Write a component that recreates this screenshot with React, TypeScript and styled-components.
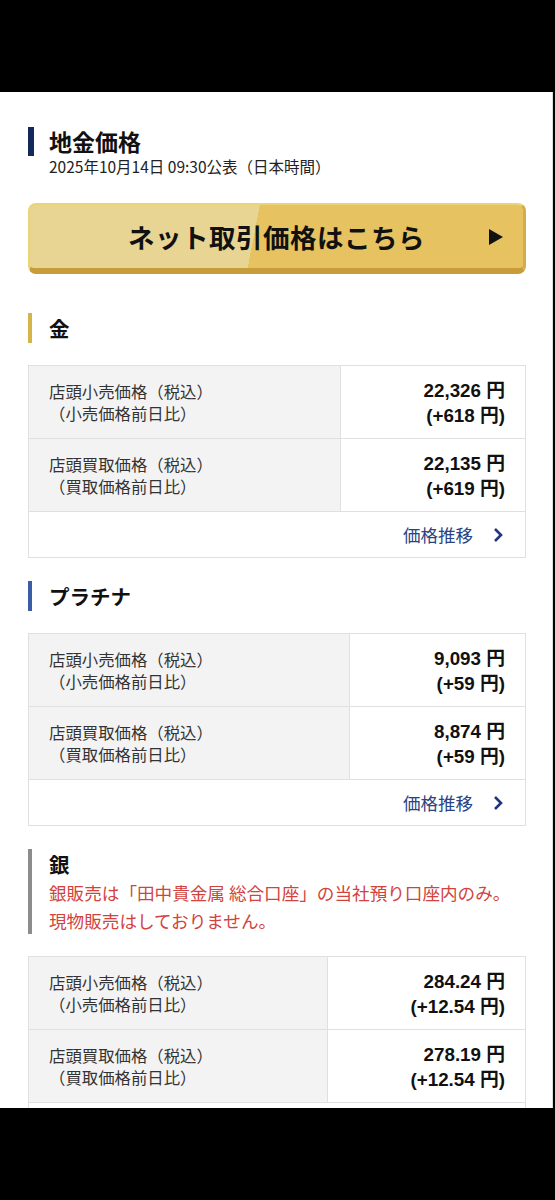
import React from "react";
import styled, { createGlobalStyle } from "styled-components";

const GlobalStyle = createGlobalStyle`
  html, body {
    margin: 0;
    padding: 0;
    background: #000;
  }
  body {
    font-family: "Noto Sans CJK JP", "Noto Sans", sans-serif;
    color: #222;
  }
`;

type Row = { label: string; sub: string; price: string; diff: string };

type Metal = {
  name: string;
  bar: string;
  leftWidth: number;
  note?: string[];
  rows: Row[];
};

const metals: Metal[] = [
  {
    name: "金",
    bar: "#d5b54a",
    leftWidth: 312,
    rows: [
      { label: "店頭小売価格（税込）", sub: "（小売価格前日比）", price: "22,326", diff: "+618" },
      { label: "店頭買取価格（税込）", sub: "（買取価格前日比）", price: "22,135", diff: "+619" },
    ],
  },
  {
    name: "プラチナ",
    bar: "#3a5da6",
    leftWidth: 321,
    rows: [
      { label: "店頭小売価格（税込）", sub: "（小売価格前日比）", price: "9,093", diff: "+59" },
      { label: "店頭買取価格（税込）", sub: "（買取価格前日比）", price: "8,874", diff: "+59" },
    ],
  },
  {
    name: "銀",
    bar: "#8c8c8c",
    leftWidth: 299,
    note: ["銀販売は「田中貴金属 総合口座」の当社預り口座内のみ。", "現物販売はしておりません。"],
    rows: [
      { label: "店頭小売価格（税込）", sub: "（小売価格前日比）", price: "284.24", diff: "+12.54" },
      { label: "店頭買取価格（税込）", sub: "（買取価格前日比）", price: "278.19", diff: "+12.54" },
    ],
  },
];

const Screen = styled.div`
  display: flex;
  flex-direction: column;
  height: 1200px;
  background: #000;
`;

const Letterbox = styled.div`
  height: 92px;
  flex: none;
  background: #000;
`;

const Page = styled.main`
  height: 1016px;
  flex: none;
  overflow: hidden;
  background: #fff;
  margin-right: 2px;
  border-right: 1px solid #dcdcdc;
  padding: 0 26px 0 28px;
`;

const TitleRow = styled.div`
  margin-top: 35px;
  display: flex;
  align-items: stretch;
`;

const TitleBar = styled.span`
  width: 6px;
  flex: none;
  background: #13295b;
  margin-right: 15px;
`;

const Title = styled.h1`
  margin: 0;
  font-size: 23px;
  line-height: 29px;
  font-weight: 700;
  color: #111;
`;

const Published = styled.p`
  margin: 0 0 0 21px;
  font-size: 15.5px;
  line-height: 20px;
  color: #222;
`;

const NetButton = styled.a`
  margin-top: 27px;
  height: 71px;
  box-sizing: border-box;
  display: flex;
  align-items: center;
  justify-content: center;
  position: relative;
  border-radius: 8px;
  border: 2px solid #ebd473;
  border-right: 3px solid #d3ad4b;
  border-bottom: 6px solid #c79d3b;
  background: linear-gradient(101deg, #e8d593 0 45.5%, #e6c360 45.5% 100%);
  color: #111;
  text-decoration: none;
  font-size: 26.5px;
  font-weight: 700;
  letter-spacing: 0.5px;
`;

const ButtonArrow = styled.span`
  position: absolute;
  right: 20px;
  top: 50%;
  transform: translateY(-50%);
  width: 0;
  height: 0;
  border-top: 8px solid transparent;
  border-bottom: 8px solid transparent;
  border-left: 14px solid #111;
`;

const Section = styled.section`
  margin-top: 39px;
  & + & {
    margin-top: 23px;
  }
`;

const Heading = styled.div<{ $bar: string }>`
  border-left: 4px solid ${(p) => p.$bar};
  padding-left: 17px;
`;

const HeadingText = styled.h2`
  margin: 0;
  font-size: 20.5px;
  line-height: 30px;
  font-weight: 700;
  color: #111;
`;

const Note = styled.p`
  margin: 0;
  font-size: 17.6px;
  line-height: 27.5px;
  color: #d2433d;
`;

const Table = styled.div<{ $left: number }>`
  margin-top: 22px;
  display: grid;
  grid-template-columns: ${(p) => p.$left}px 1fr;
  border: 1px solid #e0e0e0;
  border-bottom: none;
`;

const LabelCell = styled.div`
  height: 73px;
  box-sizing: border-box;
  background: #f3f3f3;
  border-right: 1px solid #e0e0e0;
  border-bottom: 1px solid #e0e0e0;
  padding-left: 20px;
  display: flex;
  flex-direction: column;
  justify-content: center;
  font-size: 16.4px;
  line-height: 22px;
  color: #333;
`;

const ValueCell = styled.div`
  height: 73px;
  box-sizing: border-box;
  border-bottom: 1px solid #e0e0e0;
  padding-right: 20px;
  display: flex;
  flex-direction: column;
  justify-content: center;
  align-items: flex-end;
  font-family: "Liberation Sans", "Noto Sans CJK JP", sans-serif;
  font-size: 18.8px;
  line-height: 23px;
  font-weight: 700;
  color: #111;
`;

const Yen = styled.span`
  font-family: "Noto Sans CJK JP", sans-serif;
  font-weight: 700;
`;

const LinkRow = styled.a`
  grid-column: 1 / -1;
  height: 46px;
  box-sizing: border-box;
  border-bottom: 1px solid #e0e0e0;
  display: flex;
  align-items: center;
  justify-content: flex-end;
  gap: 20px;
  padding-right: 22px;
  font-size: 17.5px;
  color: #2a4382;
  text-decoration: none;
`;

const Price = ({ value }: { value: string }) => (
  <span>
    {value} <Yen>円</Yen>
  </span>
);

export default function App() {
  return (
    <>
      <GlobalStyle />
      <Screen>
        <Letterbox />
        <Page>
          <TitleRow>
            <TitleBar />
            <Title>地金価格</Title>
          </TitleRow>
          <Published>2025年10月14日 09:30公表（日本時間）</Published>

          <NetButton href="#">
            ネット取引価格はこちら
            <ButtonArrow />
          </NetButton>

          {metals.map((m) => (
            <Section key={m.name}>
              <Heading $bar={m.bar}>
                <HeadingText>{m.name}</HeadingText>
                {m.note?.map((line) => (
                  <Note key={line}>{line}</Note>
                ))}
              </Heading>
              <Table $left={m.leftWidth}>
                {m.rows.map((r) => (
                  <React.Fragment key={r.label}>
                    <LabelCell>
                      <span>{r.label}</span>
                      <span>{r.sub}</span>
                    </LabelCell>
                    <ValueCell>
                      <Price value={r.price} />
                      <span>
                        ({r.diff} <Yen>円</Yen>)
                      </span>
                    </ValueCell>
                  </React.Fragment>
                ))}
                <LinkRow href="#">
                  価格推移
                  <svg width="10" height="16" viewBox="0 0 10 16">
                    <path d="M2 2 L8 8 L2 14" fill="none" stroke="#1f3580" strokeWidth="2.6" />
                  </svg>
                </LinkRow>
              </Table>
            </Section>
          ))}
        </Page>
        <Letterbox />
      </Screen>
    </>
  );
}
